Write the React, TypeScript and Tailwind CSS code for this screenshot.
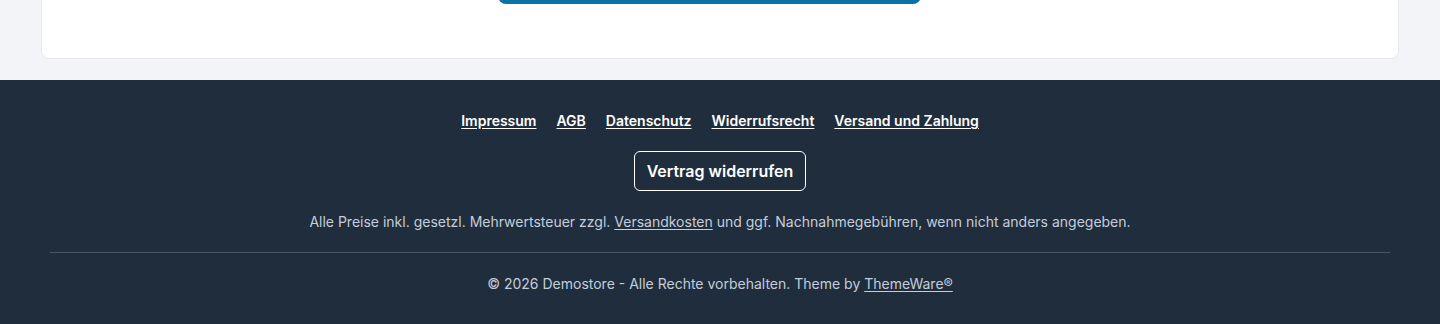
export default function App() {
  const links = ["Impressum", "AGB", "Datenschutz", "Widerrufsrecht", "Versand und Zahlung"];
  return (
    <div className="min-h-screen bg-[#f3f4f8] font-['Inter','Noto_Sans',sans-serif] overflow-hidden">
      {/* Card tail */}
      <div className="px-[41px] pb-[21px]">
        <div className="-mt-[40px] h-[99px] bg-white rounded-b-lg border border-t-0 border-[#e7e9ee] flex">
          <div className="ml-[456px] w-[423px] h-[44px] bg-[#0b72a9] rounded-lg" />
        </div>
      </div>

      {/* Footer */}
      <footer className="bg-[#1f2d3d] pt-[31px] pb-[30px]">
        <nav className="flex justify-center gap-5">
          {links.map((l) => (
            <a key={l} href="#" className="text-white text-sm font-semibold underline underline-offset-2 leading-5">
              {l}
            </a>
          ))}
        </nav>
        <div className="flex justify-center mt-5">
          <button className="h-10 px-3 border border-white rounded-md text-white text-base font-semibold">
            Vertrag widerrufen
          </button>
        </div>
        <p className="mt-[21px] text-center text-sm leading-5 text-[#c4cedb]">
          Alle Preise inkl. gesetzl. Mehrwertsteuer zzgl.{" "}
          <a href="#" className="underline underline-offset-2">Versandkosten</a> und ggf. Nachnahmegebühren, wenn nicht anders angegeben.
        </p>
        <div className="mx-[50px] mt-[20px] border-t border-[#4a5666]" />
        <p className="mt-[21px] text-center text-sm leading-5 text-[#c4cedb]">
          © 2026 Demostore - Alle Rechte vorbehalten. Theme by{" "}
          <a href="#" className="underline underline-offset-2">ThemeWare®</a>
        </p>
      </footer>
    </div>
  );
}
